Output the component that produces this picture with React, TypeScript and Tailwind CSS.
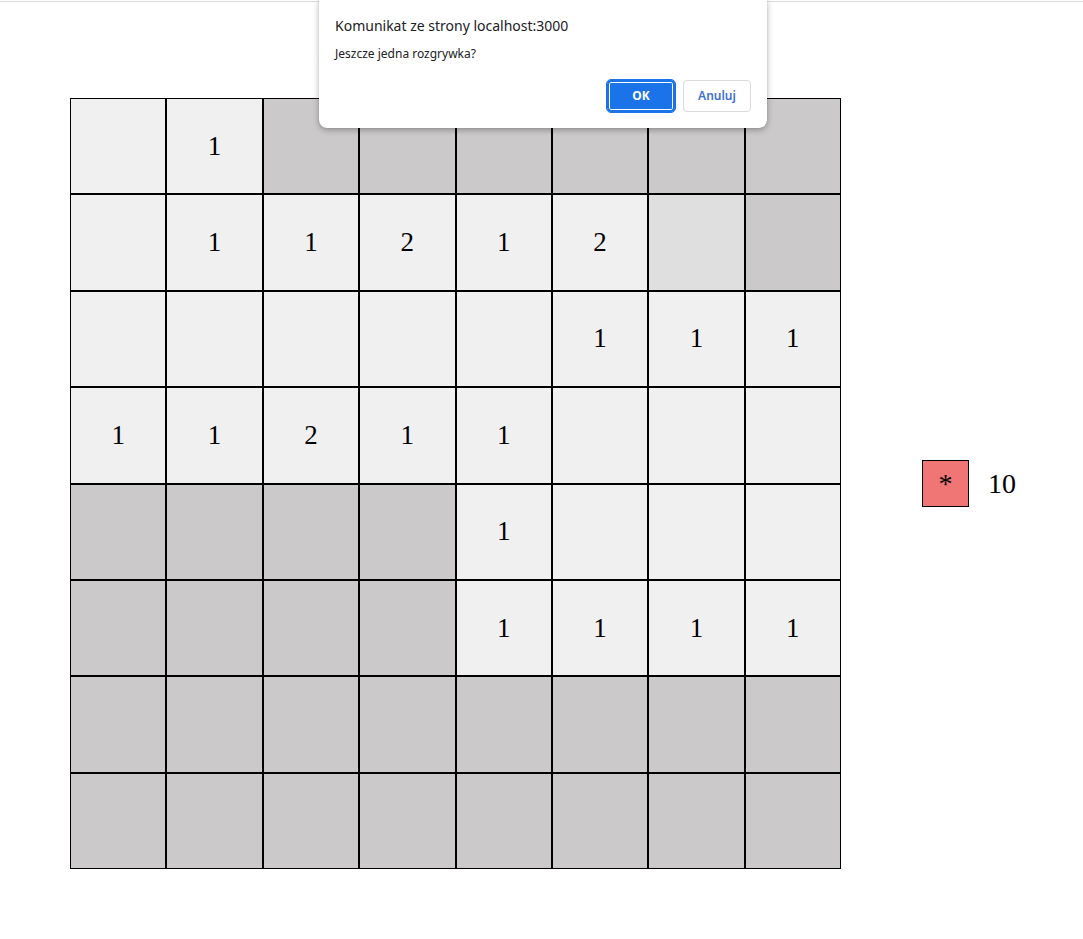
import React from "react";

type Cell = "U" | "L" | "" | "1" | "2";

const board: Cell[][] = [
  ["", "1", "U", "U", "U", "U", "U", "U"],
  ["", "1", "1", "2", "1", "2", "L", "U"],
  ["", "", "", "", "", "1", "1", "1"],
  ["1", "1", "2", "1", "1", "", "", ""],
  ["U", "U", "U", "U", "1", "", "", ""],
  ["U", "U", "U", "U", "1", "1", "1", "1"],
  ["U", "U", "U", "U", "U", "U", "U", "U"],
  ["U", "U", "U", "U", "U", "U", "U", "U"],
];

function BoardCell({ value }: { value: Cell }) {
  const bg =
    value === "U" ? "bg-[#cbc9ca]" : value === "L" ? "bg-[#dfdfdf]" : "bg-[#f0f0f0]";
  return (
    <div
      className={`flex items-center justify-center border border-black ${bg} text-[27px] leading-none text-black`}
    >
      {value !== "U" && value !== "L" ? value : null}
    </div>
  );
}

// okno confirm() z przeglądarki
function ConfirmDialog() {
  return (
    <div className="absolute left-[319px] top-0 w-[448px] rounded-b-lg bg-white px-4 pb-4 pt-[16px] shadow-[0_2px_6px_rgba(0,0,0,0.3),0_0_1px_rgba(0,0,0,0.3)] [font-family:'Noto_Sans',Roboto,sans-serif]">
      <p className="text-[14px] leading-5 text-[#202124]">Komunikat ze strony localhost:3000</p>
      <p className="mt-[10px] text-[12px] leading-4 text-[#202124]">Jeszcze jedna rozgrywka?</p>
      <div className="mt-[18px] flex justify-end gap-2">
        <button className="h-8 w-[68px] rounded-[4px] border-2 border-[#1a73e8] bg-[#1a73e8] text-[12px] font-bold text-white outline outline-1 outline-offset-0 outline-[#1a73e8] ring-1 ring-inset ring-white">
          OK
        </button>
        <button className="h-8 w-[68px] rounded-[4px] border border-[#dadce0] bg-white text-[12px] font-semibold text-[#3c6fd8]">
          Anuluj
        </button>
      </div>
    </div>
  );
}

export default function App() {
  return (
    <div className="relative min-h-[939px] w-full bg-white [font-family:'Liberation_Serif','Times_New_Roman',serif]">
      <div className="h-[2px] border-b border-[#d9d9d9]" />
      <div className="flex items-center pl-[70px] pt-[96px]">
        <div className="grid h-[771px] w-[771px] grid-cols-8 grid-rows-8">
          {board.map((row, r) =>
            row.map((c, i) => <BoardCell key={`${r}-${i}`} value={c} />)
          )}
        </div>
        <div className="ml-[81px] flex items-center">
          <div className="flex h-[47px] w-[47px] items-center justify-center border border-black bg-[#f07575] pt-[1px] text-[28px] leading-none text-black">
            *
          </div>
          <span className="ml-[19px] text-[28px] leading-none text-black">10</span>
        </div>
      </div>
      <ConfirmDialog />
    </div>
  );
}
